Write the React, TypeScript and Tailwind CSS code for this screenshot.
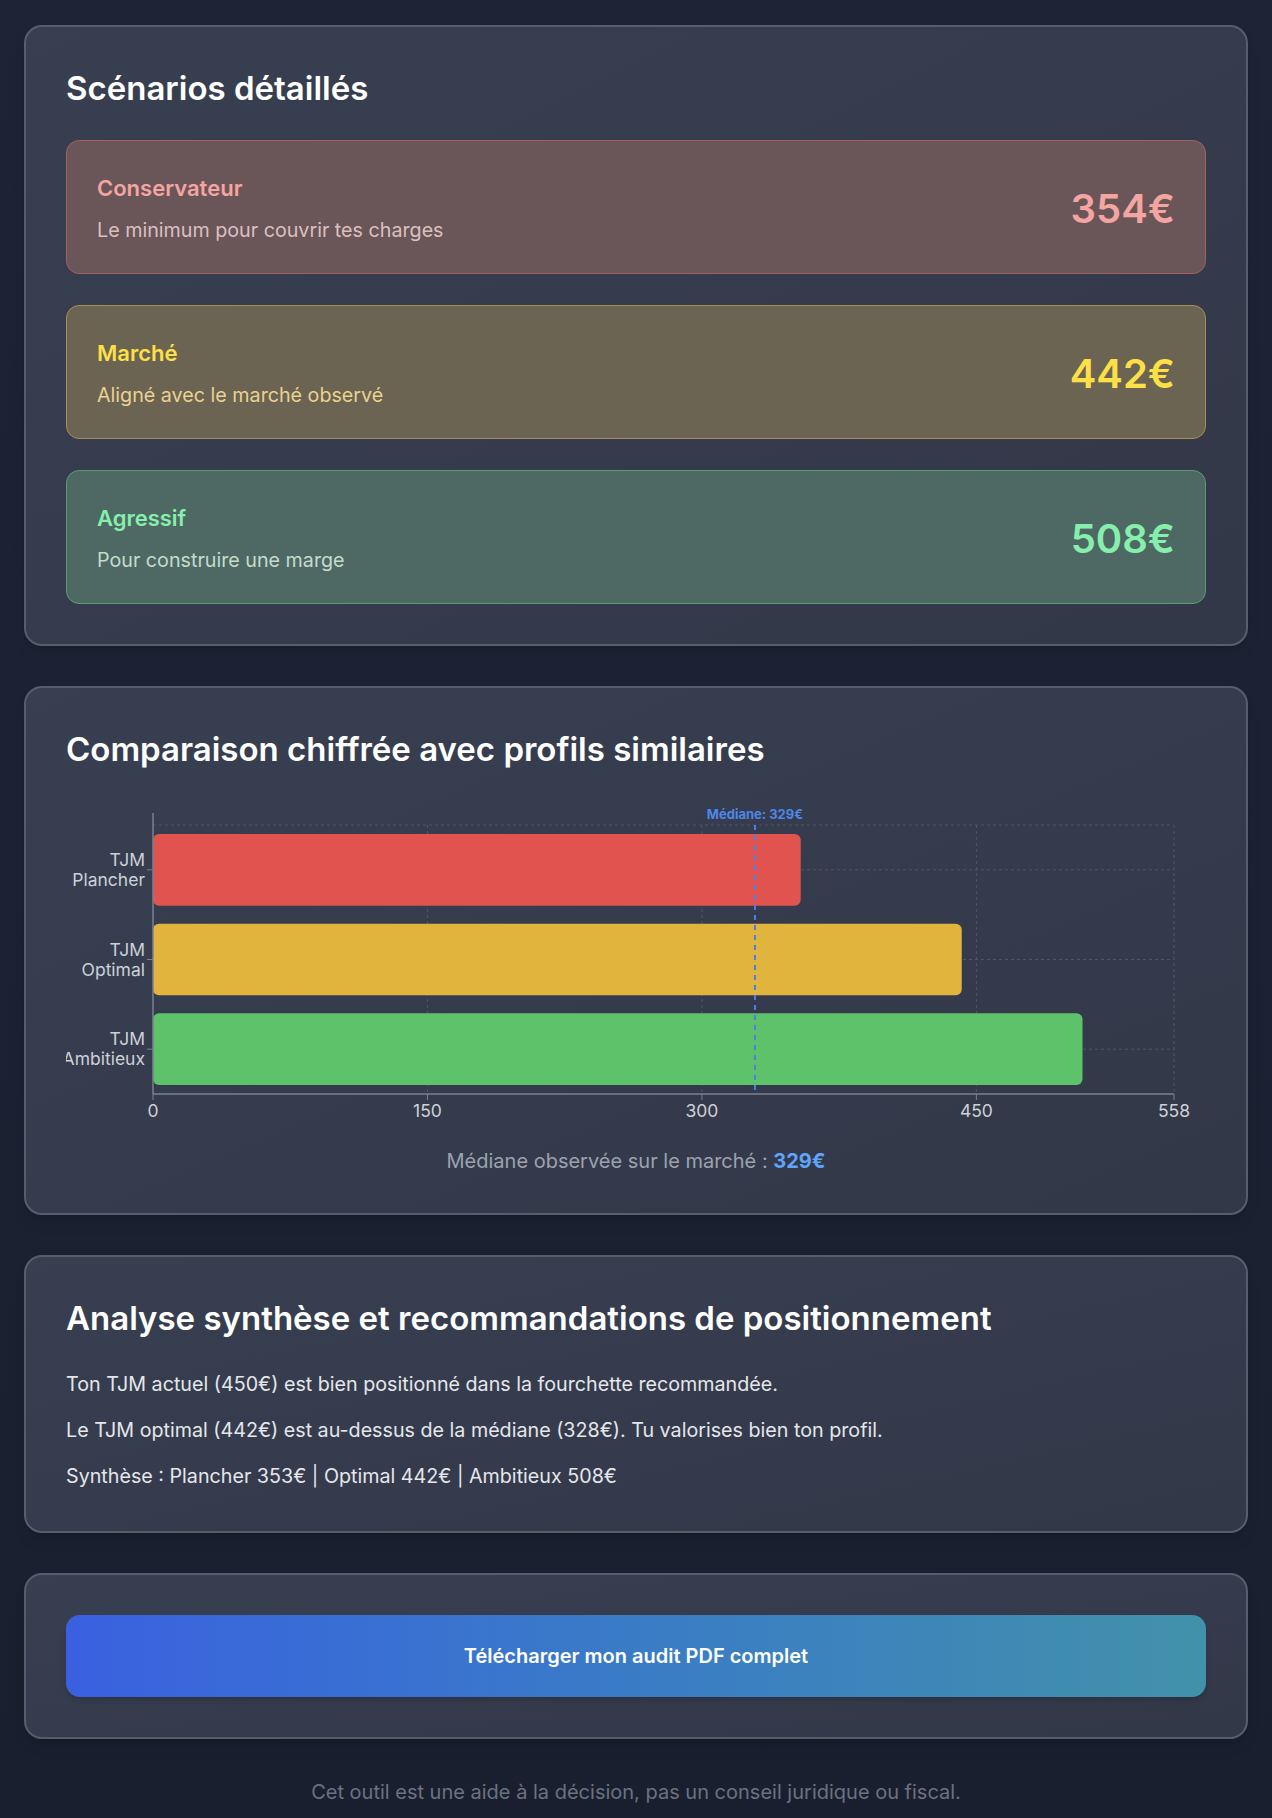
import React from "react";

const scenarios = [
  {
    name: "Conservateur",
    desc: "Le minimum pour couvrir tes charges",
    value: 354,
    box: "bg-[#6a5658] border-[#a3605f]",
    label: "text-[#f5a5a1]",
    sub: "text-[#dcc0c0]",
  },
  {
    name: "Marché",
    desc: "Aligné avec le marché observé",
    value: 442,
    box: "bg-[#6b6453] border-[#a68f4f]",
    label: "text-[#fde047]",
    sub: "text-[#ead290]",
  },
  {
    name: "Agressif",
    desc: "Pour construire une marge",
    value: 508,
    box: "bg-[#4e6963] border-[#5c9a72]",
    label: "text-[#86efac]",
    sub: "text-[#c3dccd]",
  },
];

const bars = [
  { l1: "TJM", l2: "Plancher", value: 354, color: "#e0534f" },
  { l1: "TJM", l2: "Optimal", value: 442, color: "#e1b43e" },
  { l1: "TJM", l2: "Ambitieux", value: 508, color: "#5dc26a" },
];

function Card({ children }: { children: React.ReactNode }) {
  return (
    <div className="rounded-[18px] border-2 border-[#565d6d] bg-gradient-to-br from-[#383f51] to-[#323848] p-10 shadow-lg">
      {children}
    </div>
  );
}

function Title({ children, className = "" }: { children: React.ReactNode; className?: string }) {
  return <h2 className={`text-[33px] font-semibold leading-[42px] text-white ${className}`}>{children}</h2>;
}

function Chart() {
  // dimensions du graphique
  const W = 1140;
  const H = 338;
  const left = 87;
  const right = 1108;
  const top = 32;
  const bottom = 301;
  const max = 558;
  const x = (v: number) => left + (v / max) * (right - left);
  const band = (bottom - top) / 3;
  const median = 329;
  const ticks = [0, 150, 300, 450, 558];

  return (
    <svg width={W} height={H} className="block" style={{ fontFamily: "Inter, sans-serif" }}>
      {/* grille */}
      <line x1={left} y1={top} x2={right} y2={top} stroke="#4f5667" strokeDasharray="3 3" />
      {bars.map((_, i) => (
        <line key={i} x1={left} y1={top + band * i + band / 2} x2={right} y2={top + band * i + band / 2} stroke="#4f5667" strokeDasharray="3 3" />
      ))}
      {ticks.slice(1).map((t) => (
        <line key={t} x1={x(t)} y1={top} x2={x(t)} y2={bottom} stroke="#4f5667" strokeDasharray="3 3" />
      ))}

      {/* barres */}
      {bars.map((b, i) => (
        <rect key={b.l2} x={left} y={top + band * i + 9} width={x(b.value) - left} height={band - 18} rx={6} fill={b.color} />
      ))}

      {/* axe Y */}
      <line x1={left} y1={top - 12} x2={left} y2={bottom} stroke="#7a8190" strokeWidth={1.5} />
      {bars.map((b, i) => {
        const cy = top + band * i + band / 2;
        return (
          <g key={b.l2}>
            <line x1={left - 6} y1={cy} x2={left} y2={cy} stroke="#7a8190" />
            <text x={79} y={cy - 4} textAnchor="end" fontSize={17.5} fill="#cdd1d8">
              {b.l1}
            </text>
            <text x={79} y={cy + 16} textAnchor="end" fontSize={17.5} fill="#cdd1d8">
              {b.l2}
            </text>
          </g>
        );
      })}

      {/* axe X */}
      <line x1={left} y1={bottom} x2={right} y2={bottom} stroke="#7a8190" strokeWidth={1.5} />
      {ticks.map((t) => (
        <g key={t}>
          <line x1={x(t)} y1={bottom} x2={x(t)} y2={bottom + 6} stroke="#7a8190" />
          <text x={x(t)} y={bottom + 23} textAnchor="middle" fontSize={17.5} fill="#cdd1d8">
            {t}
          </text>
        </g>
      ))}

      {/* médiane */}
      <line x1={x(median)} y1={top} x2={x(median)} y2={bottom} stroke="#4a7fe6" strokeWidth={2} strokeDasharray="5 5" />
      <text x={x(median)} y={top - 6} textAnchor="middle" fontSize={13} fontWeight={700} fill="#4f86e8">
        Médiane: 329€
      </text>
    </svg>
  );
}

export default function App() {
  return (
    <div className="min-h-screen bg-gradient-to-b from-[#1d2436] to-[#1a1f2f] px-6 pt-[25px] pb-3 font-['Inter','Noto_Sans',sans-serif]">
      <div className="flex flex-col gap-[40px]">
        <Card>
          <Title className="mb-[31px]">Scénarios détaillés</Title>
          <div className="flex flex-col gap-[31px]">
            {scenarios.map((s) => (
              <div key={s.name} className={`flex items-center justify-between rounded-[13px] border-[1.5px] px-[30px] pt-[32px] pb-[28px] ${s.box}`}>
                <div>
                  <div className={`text-[22px] font-semibold leading-[31px] ${s.label}`}>{s.name}</div>
                  <div className={`mt-[11px] text-[19.7px] leading-[30px] ${s.sub}`}>{s.desc}</div>
                </div>
                <div className={`text-[40px] font-semibold ${s.label}`}>{s.value}€</div>
              </div>
            ))}
          </div>
        </Card>

        <Card>
          <Title>Comparaison chiffrée avec profils similaires</Title>
          <div className="mt-[23px]">
            <Chart />
          </div>
          <p className="mt-[18px] text-center text-[20px] leading-[24px] text-[#9ca3af]">
            Médiane observée sur le marché : <span className="font-bold text-[#60a5fa]">329€</span>
          </p>
        </Card>

        <Card>
          <Title className="mb-[30px]">Analyse synthèse et recommandations de positionnement</Title>
          <div className="space-y-4 text-[19.7px] leading-[30px] text-[#e5e7eb]">
            <p>Ton TJM actuel (450€) est bien positionné dans la fourchette recommandée.</p>
            <p>Le TJM optimal (442€) est au-dessus de la médiane (328€). Tu valorises bien ton profil.</p>
            <p>Synthèse : Plancher 353€ | Optimal 442€ | Ambitieux 508€</p>
          </div>
        </Card>

        <Card>
          <button className="flex h-[82px] w-full items-center justify-center rounded-[14px] bg-gradient-to-r from-[#3a60e0] to-[#4291aa] text-[20px] font-semibold text-white shadow-md">
            Télécharger mon audit PDF complet
          </button>
        </Card>
      </div>
      <p className="mt-[39px] text-center text-[20px] leading-[28px] text-[#6b7280]">
        Cet outil est une aide à la décision, pas un conseil juridique ou fiscal.
      </p>
    </div>
  );
}
